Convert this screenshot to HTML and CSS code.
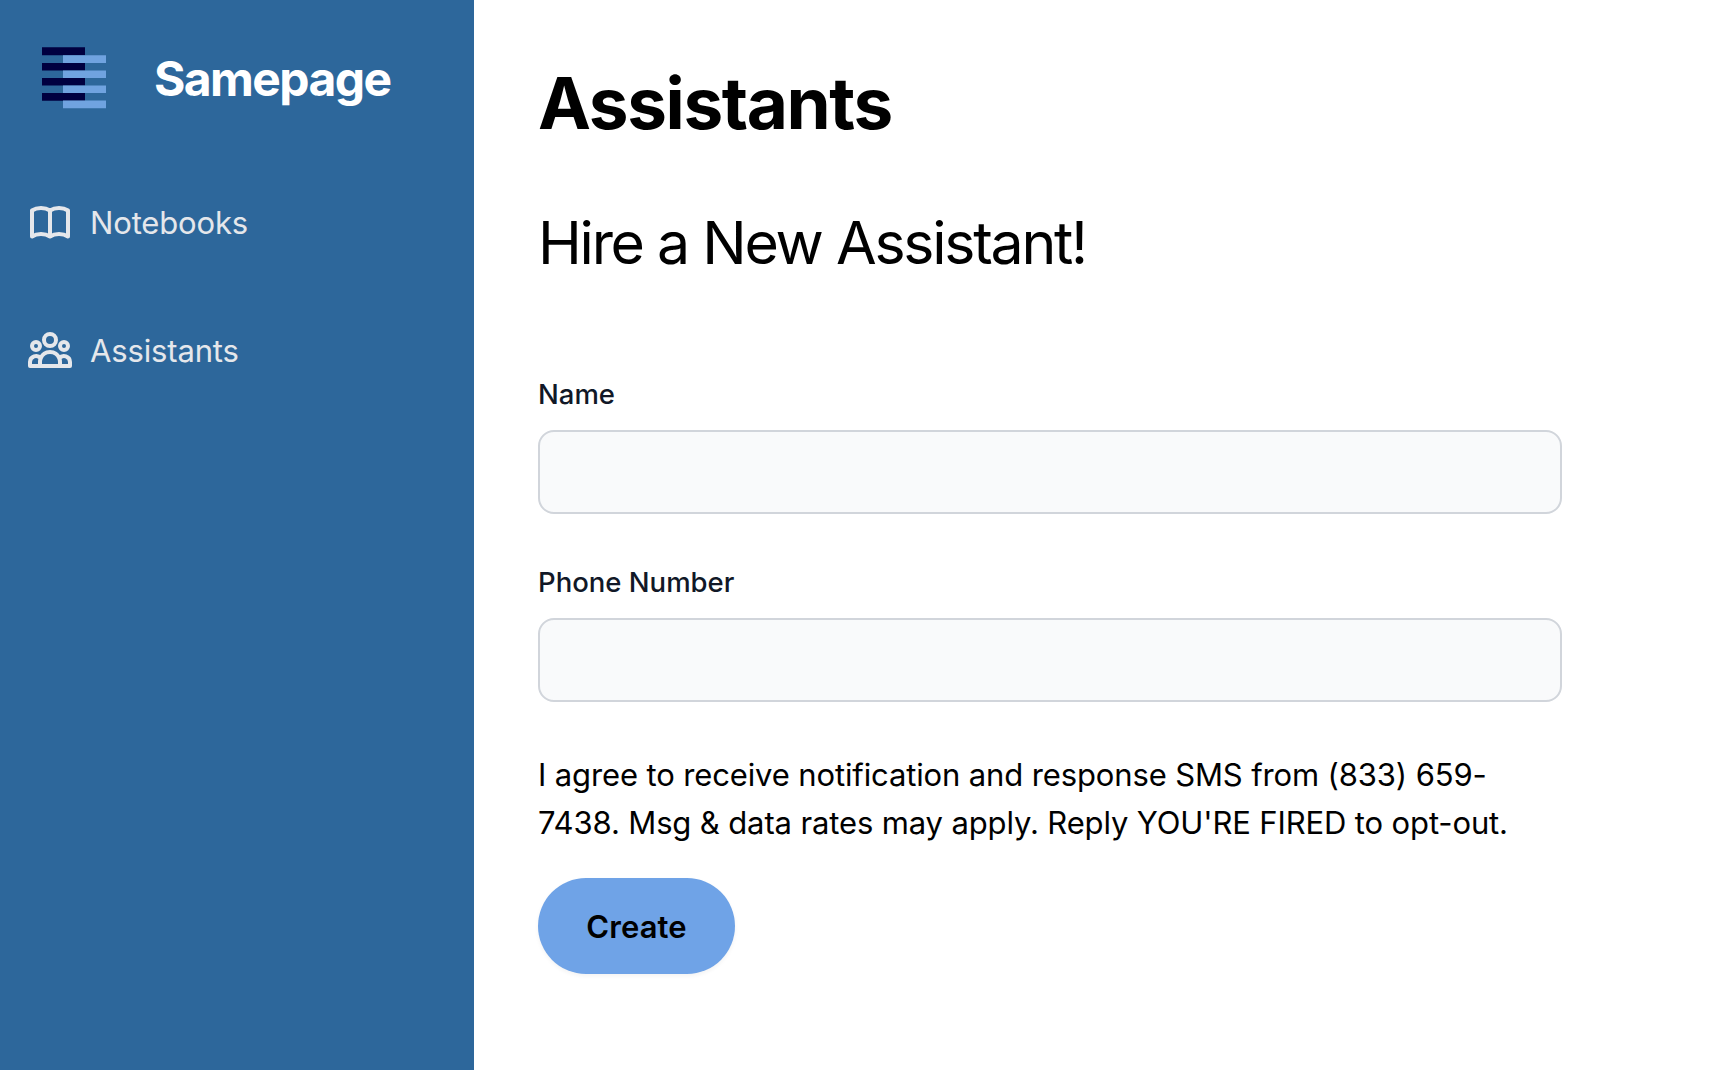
FILE: index.html
```html
<!DOCTYPE html>
<html lang="en">
<head>
<meta charset="utf-8">
<title>Samepage</title>
<link rel="stylesheet" href="styles.css">
</head>
<body>
<div class="app">
  <aside class="sidebar">
    <a class="brand">
      <svg class="brand-logo" width="64" height="64" viewBox="0 0 64 64">
        <path fill="#000040" d="M0 .3h43v7.9H0zM0 15.9h43v7.7H0zM0 30.9h43v7.7H0zM0 45.9h43v7.8H0z"/>
        <path fill="#70a3e0" d="M21 8.2h43v7.8H21zM21 23.4h43v7.7H21zM21 38.4h43v7.7H21zM21 53.6h43v7.7H21z"/>
      </svg>
      <span class="brand-name">Samepage</span>
    </a>
    <nav class="nav">
      <a class="nav-item">
        <svg class="nav-icon" width="48" height="48" viewBox="0 0 24 24" fill="none" stroke="currentColor" stroke-width="2" stroke-linecap="round" stroke-linejoin="round"><path d="M12 6.253v13m0-13C10.832 5.477 9.246 5 7.5 5S4.168 5.477 3 6.253v13C4.168 18.477 5.754 18 7.5 18s3.332.477 4.5 1.253m0-13C13.168 5.477 14.754 5 16.5 5c1.747 0 3.332.477 4.5 1.253v13C19.832 18.477 18.247 18 16.5 18c-1.746 0-3.332.477-4.5 1.253"/></svg>
        <span>Notebooks</span>
      </a>
      <a class="nav-item">
        <svg class="nav-icon" width="48" height="48" viewBox="0 0 24 24" fill="none" stroke="currentColor" stroke-width="2" stroke-linecap="round" stroke-linejoin="round"><path d="M17 20h5v-2a3 3 0 0 0-5.356-1.857M17 20H7m10 0v-2c0-.656-.126-1.283-.356-1.857M7 20H2v-2a3 3 0 0 1 5.356-1.857M7 20v-2c0-.656.126-1.283.356-1.857m0 0a5.002 5.002 0 0 1 9.288 0M15 7a3 3 0 1 1-6 0 3 3 0 0 1 6 0zm6 3a2 2 0 1 1-4 0 2 2 0 0 1 4 0zM7 10a2 2 0 1 1-4 0 2 2 0 0 1 4 0z"/></svg>
        <span>Assistants</span>
      </a>
    </nav>
  </aside>
  <main class="content">
    <h1 class="title">Assistants</h1>
    <h2 class="subtitle">Hire a New Assistant!</h2>
    <form class="form">
      <label class="field"><span class="label">Name</span><input class="input" type="text"></label>
      <label class="field"><span class="label">Phone Number</span><input class="input" type="text"></label>
      <p class="consent">I agree to receive notification and response SMS from (833) 659-<br>7438. Msg &amp; data rates may apply. Reply YOU'RE FIRED to opt-out.</p>
      <button class="submit" type="button">Create</button>
    </form>
  </main>
</div>
</body>
</html>
```
FILE: styles.css
```css
* { box-sizing: border-box; margin: 0; }
body { font-family: Inter, "Liberation Sans", sans-serif; color: #000; background: #fff; }
.app { display: flex; height: 1070px; overflow: hidden; }
.sidebar { width: 474px; flex: none; background: #2d679b; color: #e5e7eb; }
.brand { display: flex; align-items: center; gap: 48px; height: 158px; padding-left: 42px; }
.brand-logo { flex: none; }
.brand-name { padding-bottom: 2px; font-size: 48px; font-weight: 750; letter-spacing: -1.6px; color: #fff; }
.nav { display: flex; flex-direction: column; }
.nav-item { display: flex; align-items: center; gap: 16px; height: 128px; padding-left: 26px; font-size: 31px; letter-spacing: -.15px; }
.nav-icon { flex: none; }
.content { flex: 1; padding: 63px 148px 0 64px; }
.title { font-size: 71px; line-height: 80px; font-weight: 700; letter-spacing: -1.4px; }
.subtitle { margin-top: 64px; font-size: 59px; line-height: 72px; font-weight: 400; letter-spacing: -2.25px; }
.form { display: flex; flex-direction: column; align-items: flex-start; margin-top: 95px; }
.field { display: flex; flex-direction: column; align-items: flex-start; gap: 16px; width: 1024px; margin-bottom: 48px; }
.label { font-size: 27.5px; line-height: 40px; font-weight: 500; color: #111827; }
.input { width: 100%; height: 84px; border: 2px solid #d1d5db; border-radius: 16px; background: #f9fafb; }
.consent { padding-top: 1px; font-size: 31px; line-height: 48px; letter-spacing: -.13px; white-space: nowrap; }
.submit { width: 197px; height: 96px; margin-top: 31px; padding: 0; border: 0; border-radius: 48px; background: #6fa3e7; font: 600 31px Inter, sans-serif; letter-spacing: .1px; box-shadow: 0 2px 4px rgba(0,0,0,.05); }
```
